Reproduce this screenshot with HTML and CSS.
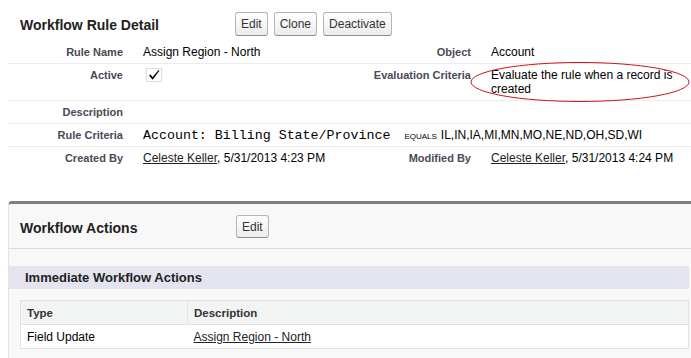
FILE: index.html
```html
<!DOCTYPE html>
<html lang="en">
<head>
    <meta charset="UTF-8">
    <title>Workflow Rule Detail</title>
    <link rel="stylesheet" href="styles.css">
</head>
<body>
    <div class="detail">
        <div class="pb-header">
            <h2 class="pb-title">Workflow Rule Detail</h2>
            <div class="pb-buttons">
                <button class="btn">Edit</button>
                <button class="btn">Clone</button>
                <button class="btn">Deactivate</button>
            </div>
        </div>

        <div class="detail-list">
            <div class="label">Rule Name</div>
            <div class="value">Assign Region - North</div>
            <div class="label">Object</div>
            <div class="value">Account</div>

            <div class="label">Active</div>
            <div class="value">
                <svg class="check" width="16" height="14" viewBox="0 0 16 14">
                    <rect x="0.5" y="0.5" width="15" height="13" fill="none" stroke="#bbb" stroke-dasharray="1 1"/>
                    <path d="M3 7.5 L4.6 6.6 L6.4 9.2 L12.6 2 L13.4 2.8 L6.6 11.8 Z" fill="#000"/>
                </svg>
            </div>
            <div class="label">Evaluation Criteria</div>
            <div class="value marked">
                Evaluate the rule when a record is created
                <svg class="ring" width="222" height="42" viewBox="0 0 222 42">
                    <ellipse cx="111" cy="21" rx="109" ry="19.5" fill="none" stroke="#c8141c" stroke-width="1"/>
                </svg>
            </div>

            <div class="label">Description</div>
            <div class="value wide"></div>

            <div class="label">Rule Criteria</div>
            <div class="value wide"><code>Account: Billing State/Province</code><span class="op">EQUALS</span>IL,IN,IA,MI,MN,MO,NE,ND,OH,SD,WI</div>

            <div class="label last">Created By</div>
            <div class="value last"><a href="#">Celeste Keller</a>, 5/31/2013 4:23 PM</div>
            <div class="label last">Modified By</div>
            <div class="value last"><a href="#">Celeste Keller</a>, 5/31/2013 4:24 PM</div>
        </div>
    </div>

    <div class="panel">
        <div class="pb-header panel-header">
            <h2 class="pb-title">Workflow Actions</h2>
            <div class="pb-buttons">
                <button class="btn">Edit</button>
            </div>
        </div>
        <div class="panel-body">
            <h3 class="sub-title">Immediate Workflow Actions</h3>
            <table class="list">
                <thead>
                    <tr>
                        <th class="col-type">Type</th>
                        <th>Description</th>
                    </tr>
                </thead>
                <tbody>
                    <tr>
                        <td>Field Update</td>
                        <td><a href="#">Assign Region - North</a></td>
                    </tr>
                </tbody>
            </table>
        </div>
    </div>
</body>
</html>
```

FILE: styles.css
```css
* {
    box-sizing: border-box;
}

body {
    margin: 0 0 0 8px;
    font-family: "Liberation Sans", Arial, sans-serif;
    font-size: 12px;
    color: #000;
    background: #fff;
}

a {
    color: #222;
    text-decoration: underline;
}

/* header with title + buttons */
.pb-header {
    display: flex;
    align-items: center;
    padding: 12px 0 5px 12px;
}

.pb-title {
    width: 215px;
    margin: 2px 0 0 0;
    font-size: 14px;
    font-weight: bold;
    color: #222;
}

.pb-buttons {
    display: flex;
    gap: 6px;
}

.btn {
    height: 24px;
    padding: 0 5px;
    font-family: "Liberation Sans", Arial, sans-serif;
    font-size: 12px;
    color: #333;
    background: linear-gradient(#ffffff, #ececec);
    border: 1px solid #b5b5b5;
    border-bottom-color: #8f8f8f;
    border-radius: 3px;
}

/* detail grid */
.detail {
    position: relative;
    margin-bottom: 32px;
}

.detail-list {
    display: grid;
    grid-template-columns: 125px 223px 125px 1fr;
}

.label,
.value {
    padding: 4px 10px;
    line-height: 14px;
    border-bottom: 1px solid #ececec;
}

.label {
    text-align: right;
    font-size: 11px;
    font-weight: bold;
    color: #4a4a56;
}

.value.wide {
    grid-column: span 3;
}

.label.last,
.value.last {
    border-bottom: none;
}

.check {
    display: block;
    margin: 0 0 0 3px;
}

.marked {
    position: relative;
}

.ring {
    position: absolute;
    left: -12px;
    top: -3px;
}

code {
    font-family: "Liberation Mono", "Courier New", monospace;
    font-size: 13.3px;
    line-height: 1;
}

.op {
    font-size: 8px;
    line-height: 1;
    margin: 0 4px 0 14px;
}

/* workflow actions panel */
.panel {
    border-top: 3px solid #7c8086;
    border-left: 1px solid #e3e3e3;
    border-radius: 4px 0 0 0;
    background: #f8f8f8;
    min-height: 160px;
}

.panel-header {
    padding: 11px 0 10px 11px;
    border-bottom: 1px solid #dcdcdc;
}

.panel-header .pb-title {
    width: 216px;
}

.panel-header .btn {
    height: 23px;
}

.panel-body {
    padding: 17px 2px 10px 0;
}

.sub-title {
    margin: 0 0 11px 0;
    padding: 0 0 0 16px;
    height: 23px;
    line-height: 23px;
    font-size: 13px;
    font-weight: bold;
    color: #222;
    background: #e3e4ef;
}

.list {
    width: calc(100% - 11px);
    margin-left: 11px;
    border-collapse: collapse;
    border: 1px solid #e0e3e5;
    background: #fff;
}

.list th,
.list td {
    height: 24px;
    padding: 0 6px;
    text-align: left;
    border-bottom: 1px solid #e0e3e5;
}

.list th {
    background: #f2f3f3;
    font-size: 11.5px;
    font-weight: bold;
    color: #333;
}

.list th + th {
    border-left: 1px solid #e0e3e5;
}

.col-type {
    width: 167px;
}
```
